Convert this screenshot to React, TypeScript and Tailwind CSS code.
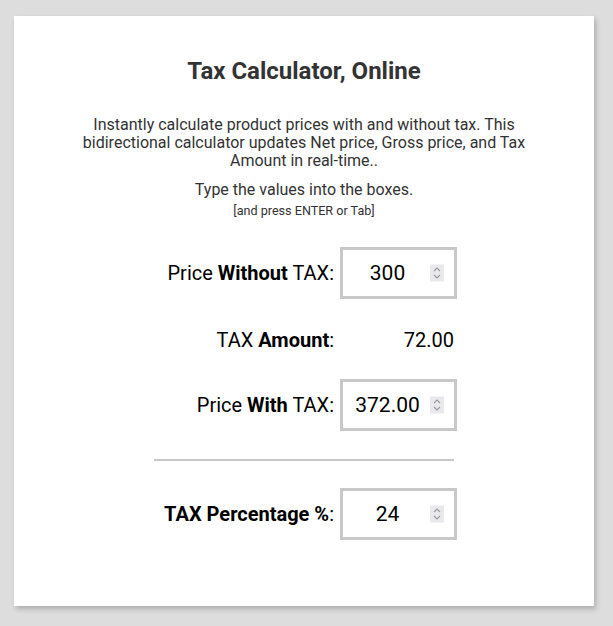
import { useState } from "react";

const Spinner = () => (
  <span className="pointer-events-none absolute right-[10px] top-1/2 flex h-[17px] w-[14px] -translate-y-1/2 flex-col items-center justify-center bg-[#e9e9ed]">
    <svg width="8" height="13" viewBox="0 0 8 13" fill="none" stroke="#9a9a9a" strokeWidth="1.1">
      <path d="M1 4.5 L4 1.5 L7 4.5" />
      <path d="M1 8.5 L4 11.5 L7 8.5" />
    </svg>
  </span>
);

interface RowProps {
  label: React.ReactNode;
  value: string;
  onChange: (v: string) => void;
}

const InputRow = ({ label, value, onChange }: RowProps) => (
  <div className="flex items-center">
    <div className="w-[326px] pr-[6px] text-right text-[20px] text-black">{label}</div>
    <div className="relative h-[52px] w-[117px] border-[3px] border-[#c8c8c8] bg-white">
      <input
        type="text"
        value={value}
        onChange={(e) => onChange(e.target.value)}
        className="h-full w-full pr-[22px] text-center font-['Roboto',sans-serif] text-[21px] text-black outline-none"
      />
      <Spinner />
    </div>
  </div>
);

export default function App() {
  const [net, setNet] = useState("300");
  const [gross, setGross] = useState("372.00");
  const [rate, setRate] = useState("24");
  const tax = (parseFloat(gross) - parseFloat(net) || 0).toFixed(2);

  return (
    <div className="min-h-screen bg-[#dddddd] pt-[16px] font-['Roboto',sans-serif] text-[#333333]">
      <div className="ml-[14px] h-[590px] w-[580px] bg-white pt-[42px] shadow-[2px_3px_5px_rgba(0,0,0,0.22)]">
        <h1 className="text-center text-[24px] font-bold leading-[26px]">Tax Calculator, Online</h1>
        <p className="mx-auto mt-[32px] w-[470px] text-center text-[16px] leading-[18px]">
          Instantly calculate product prices with and without tax. This bidirectional calculator updates Net price, Gross
          price, and Tax Amount in real-time..
        </p>
        <p className="mt-[11px] text-center text-[16px] leading-[18px]">Type the values into the boxes.</p>
        <p className="mt-[5px] text-center text-[12.6px] leading-[14px]">[and press ENTER or Tab]</p>

        <div className="mt-[29px] flex flex-col">
          <InputRow
            label={
              <>
                Price <b>Without</b> TAX:
              </>
            }
            value={net}
            onChange={setNet}
          />
          <div className="mt-[26px] flex items-center">
            <div className="w-[326px] pr-[6px] text-right text-[20px] text-black">
              TAX <b>Amount</b>:
            </div>
            <div className="w-[114px] text-right text-[20px] text-black">{tax}</div>
          </div>
          <div className="mt-[24px]">
            <InputRow
              label={
                <>
                  Price <b>With</b> TAX:
                </>
              }
              value={gross}
              onChange={setGross}
            />
          </div>
          <div className="ml-[140px] mt-[28px] h-[2px] w-[300px] bg-[#c8c8c8]" />
          <div className="mt-[27px]">
            <InputRow
              label={
                <>
                  <b>TAX Percentage %</b>:
                </>
              }
              value={rate}
              onChange={setRate}
            />
          </div>
        </div>
      </div>
    </div>
  );
}
